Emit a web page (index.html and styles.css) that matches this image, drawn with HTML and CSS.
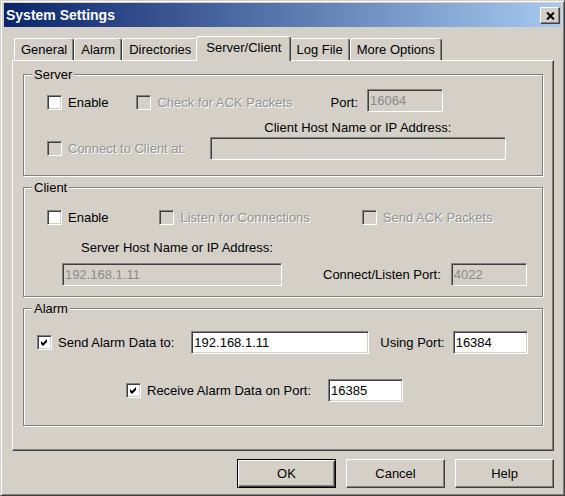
FILE: index.html
```html
<!DOCTYPE html>
<html>
<head>
<meta charset="utf-8">
<title>System Settings</title>
<link rel="stylesheet" href="styles.css">
</head>
<body>
<div class="window">
  <div class="titlebar">
    <span class="title">System Settings</span>
    <span class="close"><svg width="9" height="8" viewBox="0 0 9 8"><path d="M1 0.5 L8 7.5 M8 0.5 L1 7.5" stroke="#000" stroke-width="2" fill="none"/></svg></span>
  </div>
  <div class="body">
    <div class="tabs">
      <div class="tab">General</div>
      <div class="tab">Alarm</div>
      <div class="tab">Directories</div>
      <div class="tab active">Server/Client</div>
      <div class="tab">Log File</div>
      <div class="tab">More Options</div>
    </div>
    <div class="panel">
      <div class="group server">
        <div class="legend">Server</div>
        <div class="row s-row1">
          <label class="check low"><span class="box"></span>Enable</label>
          <label class="check low disabled s-ack"><span class="box"></span>Check for ACK Packets</label>
          <span class="lbl low s-port">Port:</span>
          <input class="field port s-portin" type="text" value="16064" disabled>
        </div>
        <div class="row s-row2">
          <label class="check disabled tall"><span class="box"></span>Connect to Client at:</label>
          <div class="col s-col">
            <div class="col-lbl">Client Host Name or IP Address:</div>
            <input class="field s-host" type="text" value="" disabled>
          </div>
        </div>
      </div>

      <div class="group client">
        <div class="legend">Client</div>
        <div class="row c-row1">
          <label class="check"><span class="box"></span>Enable</label>
          <label class="check disabled c-listen"><span class="box"></span>Listen for Connections</label>
          <label class="check disabled c-send"><span class="box"></span>Send ACK Packets</label>
        </div>
        <div class="row c-row2">
          <div class="col c-col">
            <div class="col-lbl c-lbl">Server Host Name or IP Address:</div>
            <input class="field c-host" type="text" value="192.168.1.11" disabled>
          </div>
          <span class="lbl c-portlbl">Connect/Listen Port:</span>
          <input class="field port c-portin" type="text" value="4022" disabled>
        </div>
      </div>

      <div class="group alarm">
        <div class="legend">Alarm</div>
        <div class="row a-row1">
          <label class="check"><span class="box"><svg width="7" height="7" viewBox="0 0 7 7"><polygon points="0,2 2,4 6,0 6,3 2,7 0,5" fill="#000"/></svg></span>Send Alarm Data to:</label>
          <input class="field a-host" type="text" value="192.168.1.11">
          <span class="lbl a-portlbl">Using Port:</span>
          <input class="field port a-portin" type="text" value="16384">
        </div>
        <div class="row a-row2">
          <label class="check"><span class="box"><svg width="7" height="7" viewBox="0 0 7 7"><polygon points="0,2 2,4 6,0 6,3 2,7 0,5" fill="#000"/></svg></span>Receive Alarm Data on Port:</label>
          <input class="field port a-recvin" type="text" value="16385">
        </div>
      </div>
    </div>
    <div class="buttons">
      <div class="btn default">OK</div>
      <div class="btn">Cancel</div>
      <div class="btn">Help</div>
    </div>
  </div>
</div>
</body>
</html>
```
FILE: styles.css
```css
* { box-sizing: border-box; }
html, body { margin: 0; padding: 0; }
body {
  width: 565px;
  height: 496px;
  overflow: hidden;
  background: #d4d0c8;
  font-family: "Liberation Sans", Arial, sans-serif;
  font-size: 13px;
  color: #000;
}
.window {
  width: 565px;
  height: 496px;
  background: #d4d0c8;
  border: 1px solid;
  border-color: #d4d0c8 #404040 #404040 #d4d0c8;
  box-shadow: inset 1px 1px 0 #fff, inset -1px -1px 0 #808080;
  padding: 2px 3px 3px 3px;
}
.titlebar {
  height: 24px;
  display: flex;
  align-items: flex-start;
  padding-left: 2px;
  background: linear-gradient(to right, #0a246a, #a6caf0);
}
.title {
  color: #fff;
  font-weight: bold;
  font-size: 14px;
  line-height: 24px;
}
.close {
  margin-left: auto;
  margin-top: 4px;
  margin-right: 1px;
  width: 20px;
  height: 17px;
  background: #d4d0c8;
  border: 1px solid;
  border-color: #fff #404040 #404040 #fff;
  box-shadow: inset -1px -1px 0 #808080;
  display: flex;
  align-items: center;
  justify-content: center;
}
.close svg { display: block; }
.body {
  padding: 9px 7px 0 8px;
}
.tabs {
  display: flex;
  align-items: flex-end;
  height: 25px;
  margin-bottom: -1px;
  padding-left: 2px;
  position: relative;
  z-index: 1;
}
.tab {
  height: 22px;
  margin-bottom: 1px;
  padding: 0 6px;
  line-height: 21px;
  border: 1px solid;
  border-bottom: none;
  border-color: #fff #404040 transparent #fff;
  box-shadow: inset -1px 0 0 #808080;
  border-radius: 3px 3px 0 0;
  background: #d4d0c8;
  white-space: nowrap;
}
.tab.active {
  height: 25px;
  margin: 0 -2px;
  padding: 0 9px;
  line-height: 21px;
  position: relative;
  z-index: 2;
}
.panel {
  border: 1px solid;
  border-color: #fff #404040 #404040 #fff;
  box-shadow: inset -1px -1px 0 #808080;
  padding: 13px 10px 24px 10px;
}
.group {
  border: 1px solid #808080;
  box-shadow: 1px 1px 0 #fff, inset 1px 1px 0 #fff;
}
.group + .group { margin-top: 11px; }
.server { padding-bottom: 15px; }
.client { padding-bottom: 10px; }
.alarm { padding-bottom: 23px; }
.legend {
  display: table;
  margin: -8px 0 0 8px;
  padding: 0 2px;
  line-height: 15px;
  background: #d4d0c8;
}
.row {
  display: flex;
  align-items: center;
  white-space: nowrap;
}
.check {
  display: flex;
  align-items: center;
  height: 15px;
}
.check.tall { height: 23px; }
.low { position: relative; top: 2px; }
.box {
  width: 15px;
  height: 15px;
  margin-right: 6px;
  flex: none;
  background: #fff;
  border: 1px solid;
  border-color: #808080 #fff #fff #808080;
  box-shadow: inset 1px 1px 0 #404040, inset -1px -1px 0 #d4d0c8;
  display: flex;
  align-items: center;
  justify-content: center;
}
.box svg { display: block; }
.disabled { color: #939393; text-shadow: 1px 1px 0 #fff; }
.disabled .box { background: #d4d0c8; }
.lbl { line-height: 23px; }
.field {
  -webkit-appearance: none;
  appearance: none;
  height: 23px;
  margin: 0;
  padding: 0 2px;
  font: inherit;
  font-size: 13px;
  color: #000;
  background: #fff;
  border: 1px solid;
  border-color: #808080 #fff #fff #808080;
  box-shadow: inset 1px 1px 0 #404040, inset -1px -1px 0 #d4d0c8;
  border-radius: 0;
  outline: none;
}
.field:disabled {
  background: #d4d0c8;
  color: #8a8a8a;
  -webkit-text-fill-color: #8a8a8a;
  opacity: 1;
}
.port { width: 76px; }
.col { display: flex; flex-direction: column; }
.col-lbl { line-height: 15px; text-align: center; }

/* Server */
.s-row1 { margin-top: 7px; padding-left: 23px; height: 23px; }
.s-ack { margin-left: 28px; }
.s-port { margin-left: 38px; }
.s-portin { margin-left: 9px; }
.s-row2 { margin-top: 8px; padding-left: 23px; align-items: flex-end; }
.s-col { margin-left: 24px; width: 296px; }
.s-host { width: 296px; margin-top: 2px; }

/* Client */
.c-row1 { margin-top: 15px; padding-left: 23px; height: 15px; }
.c-listen { margin-left: 51px; }
.c-send { margin-left: 52px; }
.c-row2 { margin-top: 15px; padding-left: 38px; align-items: flex-end; }
.c-col { width: 220px; }
.c-lbl { padding-left: 10px; }
.c-host { width: 220px; margin-top: 8px; }
.c-portlbl { margin-left: 41px; }
.c-portin { margin-left: 10px; }

/* Alarm */
.a-row1 { margin-top: 15px; padding-left: 13px; height: 23px; }
.a-host { width: 178px; margin-left: 17px; }
.a-portlbl { margin-left: 11px; }
.a-portin { margin-left: 8px; width: 75px; }
.a-row2 { margin-top: 25px; padding-left: 102px; height: 23px; }
.a-recvin { margin-left: 17px; width: 75px; }

.buttons {
  display: flex;
  justify-content: flex-end;
  gap: 10px;
  margin-top: 8px;
}
.btn {
  width: 99px;
  height: 29px;
  line-height: 27px;
  text-align: center;
  border: 1px solid;
  border-color: #fff #404040 #404040 #fff;
  box-shadow: inset -1px -1px 0 #808080;
  background: #d4d0c8;
}
.btn.default {
  border-color: #000;
  box-shadow: inset 1px 1px 0 #fff, inset -1px -1px 0 #404040, inset -2px -2px 0 #808080;
}
```
